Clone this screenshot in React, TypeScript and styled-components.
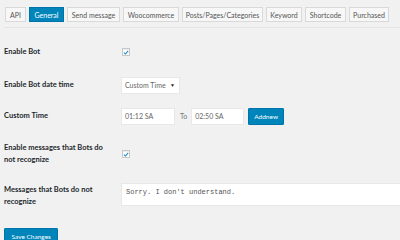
import * as React from 'react';
import styled, { createGlobalStyle } from 'styled-components';

const GlobalStyle = createGlobalStyle`
  html, body {
    margin: 0;
    padding: 0;
    background: #f1f1f1;
    width: 400px;
    height: 240px;
    overflow: hidden;
  }
  body {
    font-family: Lato, "Open Sans", sans-serif;
    font-size: 7.5px;
    color: #23282d;
  }
`;

const Page = styled.div`
  padding: 0 0 0 4px;
`;

const TabBar = styled.div`
  display: flex;
  gap: 3px;
  padding: 7px 0 0 1px;
  height: 28px;
  box-sizing: border-box;
  border-bottom: 1px solid #e4e4e4;
  margin-bottom: 8px;
`;

const Tab = styled.div<{ $active?: boolean; $w: number }>`
  width: ${p => p.$w}px;
  height: 15px;
  box-sizing: border-box;
  display: flex;
  align-items: center;
  justify-content: center;
  border: 1px solid ${p => (p.$active ? '#0073aa' : '#d9d9d9')};
  background: ${p => (p.$active ? '#0085ba' : '#f7f7f7')};
  color: ${p => (p.$active ? '#fff' : '#555')};
  font-size: 7px;
  white-space: nowrap;
`;

const Row = styled.div<{ $h: number }>`
  display: grid;
  grid-template-columns: 117px 1fr;
  align-items: center;
  height: ${p => p.$h}px;
`;

const Label = styled.div`
  font-weight: 700;
  line-height: 12px;
  width: 104px;
`;

const Field = styled.div`
  display: flex;
  align-items: center;
`;

const Check = styled.span`
  width: 8px;
  height: 8px;
  box-sizing: border-box;
  margin-left: 1px;
  border: 1px solid #c5c9cc;
  background: #fff;
  box-shadow: inset 0 1px 1px rgba(0, 0, 0, 0.08);
  display: flex;
  align-items: center;
  justify-content: center;
`;

const SelectBox = styled.div`
  width: 59px;
  height: 17px;
  box-sizing: border-box;
  background: #fff;
  border: 1px solid #e8e8e8;
  display: flex;
  align-items: center;
  justify-content: space-between;
  padding: 0 4px 0 3px;
  color: #666;
  font-size: 7px;
`;

const Arrow = styled.span`
  font-size: 5px;
  color: #222;
`;

const TextInput = styled.div<{ $w: number }>`
  width: ${p => p.$w}px;
  height: 17px;
  box-sizing: border-box;
  background: #fff;
  border: 1px solid #e8e8e8;
  display: flex;
  align-items: center;
  padding: 0 3px;
  color: #666;
  font-size: 7px;
`;

const Between = styled.span`
  color: #777;
  font-size: 7px;
  margin: 0 4px 0 5px;
`;

const BlueButton = styled.div<{ $gap?: number; $pad: number }>`
  height: 17px;
  box-sizing: border-box;
  margin-left: ${p => p.$gap ?? 0}px;
  background: #0085ba;
  border: 1px solid #0073aa;
  border-radius: 1px;
  color: #fff;
  font-size: 6.5px;
  display: flex;
  align-items: center;
  padding: 0 ${p => p.$pad}px;
  white-space: nowrap;
`;

const TextArea = styled.div`
  height: 23px;
  box-sizing: border-box;
  background: #fff;
  border: 1px solid #e8e8e8;
  padding: 4px 4px;
  font-family: "Liberation Mono", "DejaVu Sans Mono", monospace;
  font-size: 7px;
  color: #555;
  width: 300px;
  align-self: start;
  margin-top: 5px;
`;

const Footer = styled.div`
  margin-top: 14px;
  display: flex;
`;

const tabs: [string, number][] = [
  ['API', 21],
  ['General', 35],
  ['Send message', 53],
  ['Woocommerce', 56],
  ['Posts/Pages/Categories', 81],
  ['Keyword', 36],
  ['Shortcode', 41],
  ['Purchased', 40],
];

const Tick = () => (
  <svg width="7" height="7" viewBox="0 0 10 10">
    <path d="M1.5 5.2 L4 7.6 L8.6 2.2" fill="none" stroke="#1e8cbe" strokeWidth="1.8" />
  </svg>
);

export default function App() {
  return (
    <Page>
      <GlobalStyle />
      <TabBar>
        {tabs.map(([t, w]) => (
          <Tab key={t} $w={w} $active={t === 'General'}>{t}</Tab>
        ))}
      </TabBar>

      <Row $h={32}>
        <Label>Enable Bot</Label>
        <Field><Check><Tick /></Check></Field>
      </Row>
      <Row $h={34}>
        <Label>Enable Bot date time</Label>
        <Field>
          <SelectBox>Custom Time <Arrow>▼</Arrow></SelectBox>
        </Field>
      </Row>
      <Row $h={28}>
        <Label>Custom Time</Label>
        <Field>
          <TextInput $w={54}>01:12 SA</TextInput>
          <Between>To</Between>
          <TextInput $w={53}>02:50 SA</TextInput>
          <BlueButton $gap={4} $pad={5}>Addnew</BlueButton>
        </Field>
      </Row>
      <Row $h={48}>
        <Label>Enable messages that Bots do not recognize</Label>
        <Field><Check><Tick /></Check></Field>
      </Row>
      <Row $h={36}>
        <Label>Messages that Bots do not recognize</Label>
        <TextArea>Sorry. I don't understand.</TextArea>
      </Row>
      <Footer>
        <BlueButton $pad={6.5}>Save Changes</BlueButton>
      </Footer>
    </Page>
  );
}
